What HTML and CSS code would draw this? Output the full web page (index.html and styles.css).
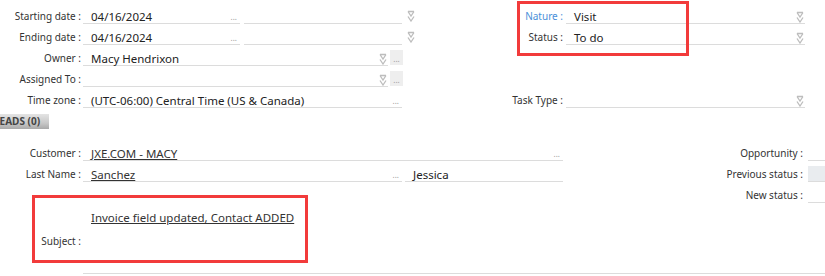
FILE: index.html
```html
<!DOCTYPE html>
<html>
<head>
  <meta charset="utf-8">
  <title>Task</title>
  <link rel="stylesheet" href="styles.css">
</head>
<body>
  <div class="page">
    <div class="top">
      <!-- linke Spalte -->
      <div class="col col-left">
        <div class="row">
          <span class="lab">Starting date :</span>
          <div class="field f-date"><span class="val">04/16/2024</span><span class="dots">...</span></div>
          <div class="field f-time"></div>
          <svg class="dd" viewBox="0 0 8 12"><path d="M1 1.5H7M1 1.5L4 6L7 1.5M1 6.5L4 11L7 6.5"/></svg>
        </div>
        <div class="row">
          <span class="lab">Ending date :</span>
          <div class="field f-date"><span class="val">04/16/2024</span><span class="dots">...</span></div>
          <div class="field f-time"></div>
          <svg class="dd" viewBox="0 0 8 12"><path d="M1 1.5H7M1 1.5L4 6L7 1.5M1 6.5L4 11L7 6.5"/></svg>
        </div>
        <div class="row">
          <span class="lab">Owner :</span>
          <div class="field f-user"><span class="val">Macy Hendrixon</span>
            <svg class="dd dd-in" viewBox="0 0 8 12"><path d="M1 1.5H7M1 1.5L4 6L7 1.5M1 6.5L4 11L7 6.5"/></svg></div>
          <span class="btn-dots">...</span>
        </div>
        <div class="row">
          <span class="lab">Assigned To :</span>
          <div class="field f-user"><span class="val"></span>
            <svg class="dd dd-in" viewBox="0 0 8 12"><path d="M1 1.5H7M1 1.5L4 6L7 1.5M1 6.5L4 11L7 6.5"/></svg></div>
          <span class="btn-dots">...</span>
        </div>
        <div class="row">
          <span class="lab">Time zone :</span>
          <div class="field f-tz"><span class="val">(UTC-06:00) Central Time (US &amp; Canada)</span><span class="dots">...</span></div>
        </div>
      </div>

      <!-- rechte Spalte -->
      <div class="col col-right">
        <div class="row">
          <span class="lab lab-r lab-blue">Nature :</span>
          <div class="field f-wide"><span class="val">Visit</span>
            <svg class="dd dd-in" viewBox="0 0 8 12"><path d="M1 1.5H7M1 1.5L4 6L7 1.5M1 6.5L4 11L7 6.5"/></svg></div>
        </div>
        <div class="row">
          <span class="lab lab-r">Status :</span>
          <div class="field f-wide"><span class="val">To do</span>
            <svg class="dd dd-in" viewBox="0 0 8 12"><path d="M1 1.5H7M1 1.5L4 6L7 1.5M1 6.5L4 11L7 6.5"/></svg></div>
        </div>
        <div class="row"></div>
        <div class="row"></div>
        <div class="row">
          <span class="lab lab-r">Task Type :</span>
          <div class="field f-wide"><span class="val"></span>
            <svg class="dd dd-in" viewBox="0 0 8 12"><path d="M1 1.5H7M1 1.5L4 6L7 1.5M1 6.5L4 11L7 6.5"/></svg></div>
        </div>
      </div>
    </div>

    <div class="tab">LEADS (0)</div>

    <div class="bottom">
      <div class="col col-main">
        <div class="row">
          <span class="lab">Customer :</span>
          <div class="field f-cust"><a class="val link">JXE.COM - MACY</a><span class="dots">...</span></div>
        </div>
        <div class="row">
          <span class="lab">Last Name :</span>
          <div class="field f-tz"><a class="val link">Sanchez</a><span class="dots">...</span></div>
          <div class="field f-first"><span class="val">Jessica</span></div>
        </div>
        <div class="subject">
          <span class="lab lab-subj">Subject :</span>
          <a class="link subj-link">Invoice field updated, Contact ADDED</a>
        </div>
      </div>
      <div class="col col-side">
        <div class="row">
          <span class="lab lab-side">Opportunity :</span>
          <div class="field f-side"></div>
        </div>
        <div class="row">
          <span class="lab lab-side">Previous status :</span>
          <div class="field f-side f-grey"></div>
        </div>
        <div class="row">
          <span class="lab lab-side">New status :</span>
          <div class="field f-side"></div>
        </div>
      </div>
    </div>
    <div class="rule"></div>

    <!-- Markierungen -->
    <div class="mark mark-a"></div>
    <div class="mark mark-b"></div>
  </div>
</body>
</html>
```

FILE: styles.css
```css
body {
  margin: 0;
  font-family: "Noto Sans", "Open Sans", sans-serif;
  background: #ffffff;
  color: #222222;
  overflow: hidden;
}
.page {
  position: relative;
  width: 825px;
  height: 276px;
}
.top {
  display: flex;
  padding-top: 3px;
}
.col {
  display: flex;
  flex-direction: column;
}
.col-left {
  width: 420px;
}
.col-right {
  flex: 1;
}
.row {
  display: flex;
  align-items: flex-end;
  height: 21px;
}
.lab {
  width: 81px;
  flex: none;
  text-align: right;
  font-size: 10px;
  color: #333333;
  line-height: 14px;
  padding-bottom: 1px;
  white-space: nowrap;
}
.lab-r {
  width: 143px;
}
.lab-blue {
  color: #4a90d9;
}
.field {
  display: flex;
  align-items: center;
  height: 20px;
  box-sizing: border-box;
  padding: 6px 0 0 8px;
  border-bottom: 1px solid #dcdcdc;
  margin-left: 2px;
}
.val {
  flex: 1;
  font-size: 11.5px;
  color: #222222;
  white-space: nowrap;
}
.dots {
  font-size: 8px;
  color: #999999;
  margin: 0 3px 0 0;
}
.f-date { width: 157px; }
.f-time { width: 158px; margin-left: 4px; }
.f-user { width: 305px; }
.f-tz { width: 319px; }
.f-wide { width: 239px; margin-left: 3px; }
.dd {
  width: 8px;
  height: 12px;
  flex: none;
  fill: none;
  stroke: #bdbdbd;
  stroke-width: 1.3;
  margin: 0 0 2px 5px;
}
.dd-in {
  margin: 0 1px 0 0;
}
.btn-dots {
  width: 13px;
  height: 15px;
  margin: 0 0 1px 2px;
  background: #eeeeee;
  font-size: 8px;
  color: #999999;
  text-align: center;
  line-height: 17px;
}
.tab {
  margin: 6px 0 0 -8px;
  width: 57px;
  height: 15px;
  box-sizing: border-box;
  padding-left: 2px;
  background: linear-gradient(#e4e4e4, #c8c8c8 60%, #a9a9a9);
  font-size: 10px;
  font-weight: bold;
  color: #444444;
  line-height: 15px;
  white-space: nowrap;
}
.bottom {
  display: flex;
  margin-top: 11px;
}
.col-main {
  width: 563px;
}
.col-side {
  flex: 1;
}
.link {
  color: #333333;
  text-decoration: underline;
}
.f-cust { width: 480px; }
.f-first { width: 158px; margin-left: 3px; }
.lab-side {
  width: 240px;
}
.f-side {
  flex: 1;
  margin-left: 5px;
  padding: 0;
}
.f-grey {
  background: #e9ecef;
  height: 16px;
  border-bottom: 1px solid #dcdcdc;
}
.subject {
  display: flex;
  height: 67px;
}
.lab-subj {
  align-self: flex-end;
  padding-bottom: 0;
  line-height: 16px;
}
.subj-link {
  font-size: 11.5px;
  margin: 28px 0 0 10px;
  line-height: 16px;
  height: 16px;
}
.rule {
  margin: 24px 0 0 83px;
  border-top: 1px solid #dcdcdc;
}
.mark {
  position: absolute;
  border: 3px solid #f23b3b;
  box-sizing: border-box;
}
.mark-a {
  left: 517px;
  top: 1px;
  width: 172px;
  height: 55px;
}
.mark-b {
  left: 32px;
  top: 195px;
  width: 276px;
  height: 68px;
}
```
